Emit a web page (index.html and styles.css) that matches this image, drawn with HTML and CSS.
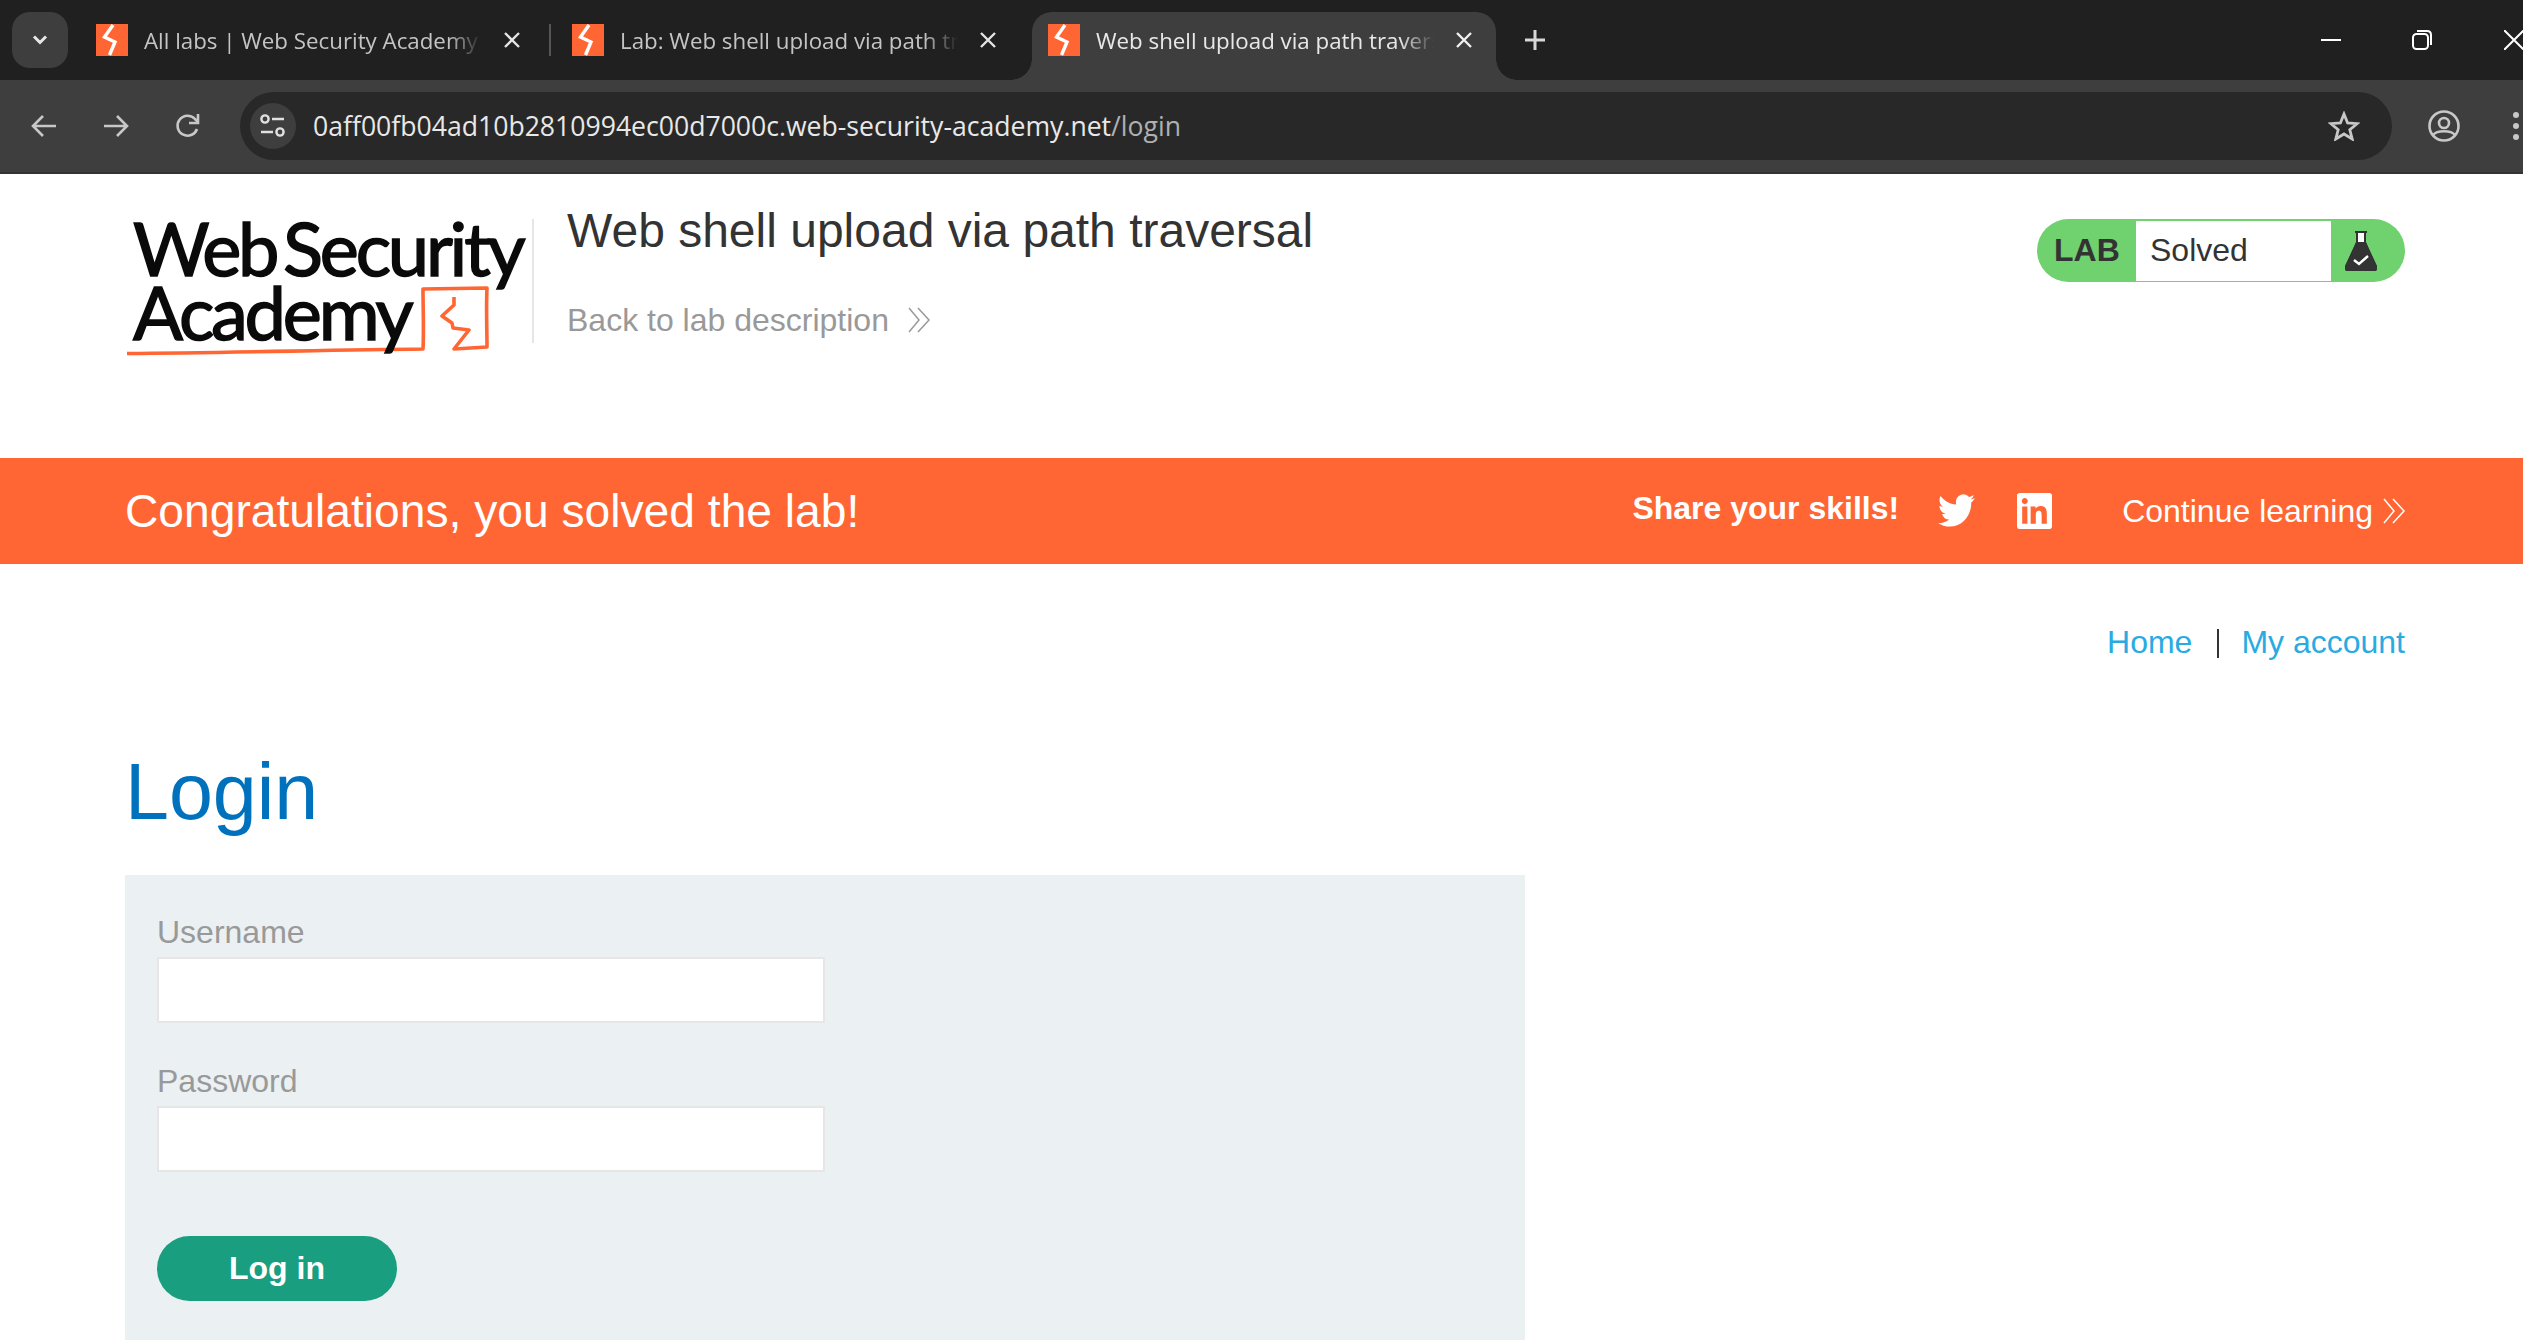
FILE: index.html
```html
<!DOCTYPE html>
<html lang="en">
<head>
<meta charset="utf-8">
<title>Web shell upload via path traversal</title>
<link rel="stylesheet" href="styles.css">
</head>
<body>
<div class="browser">
  <div class="tabstrip">
    <div class="tabsearch"><svg width="16" height="10" viewBox="0 0 16 10"><path d="M2 1.5 8 7.5 14 1.5" fill="none" stroke="#e8e8e8" stroke-width="3"/></svg></div>
    <div class="tab">
      <svg class="favicon" viewBox="0 0 32 32"><rect width="32" height="32" fill="#ff6633"/><path d="M17 1 8.5 13 19 18 13.5 31" fill="none" stroke="#fff" stroke-width="3.4"/></svg>
      <span class="tab-title">All labs | Web Security Academy</span>
      <svg class="tab-close" viewBox="0 0 16 16"><path d="M1 1 15 15M15 1 1 15" stroke="#e4e4e4" stroke-width="2.4"/></svg>
    </div>
    <div class="tab-sep"></div>
    <div class="tab">
      <svg class="favicon" viewBox="0 0 32 32"><rect width="32" height="32" fill="#ff6633"/><path d="M17 1 8.5 13 19 18 13.5 31" fill="none" stroke="#fff" stroke-width="3.4"/></svg>
      <span class="tab-title">Lab: Web shell upload via path traversal</span>
      <svg class="tab-close" viewBox="0 0 16 16"><path d="M1 1 15 15M15 1 1 15" stroke="#e4e4e4" stroke-width="2.4"/></svg>
    </div>
    <div class="tab-sep tab-sep-hidden"></div>
    <div class="tab tab-active">
      <svg class="favicon" viewBox="0 0 32 32"><rect width="32" height="32" fill="#ff6633"/><path d="M17 1 8.5 13 19 18 13.5 31" fill="none" stroke="#fff" stroke-width="3.4"/></svg>
      <span class="tab-title">Web shell upload via path traversal</span>
      <svg class="tab-close" viewBox="0 0 16 16"><path d="M1 1 15 15M15 1 1 15" stroke="#f0f0f0" stroke-width="2.4"/></svg>
    </div>
    <svg class="newtab" viewBox="0 0 20 20"><path d="M10 0V20M0 10H20" stroke="#d8d8d8" stroke-width="3"/></svg>
    <div class="winctl">
      <svg class="win-min" viewBox="0 0 20 4"><path d="M0 2H20" stroke="#fff" stroke-width="2"/></svg>
      <svg class="win-max" viewBox="0 0 20 20"><rect x="1" y="4" width="15" height="15" rx="3.5" fill="none" stroke="#fff" stroke-width="2"/><path d="M5 1H15Q19 1 19 5V15" fill="none" stroke="#fff" stroke-width="2"/></svg>
      <svg class="win-close" viewBox="0 0 20 20"><path d="M0 0 20 20M20 0 0 20" stroke="#fff" stroke-width="2"/></svg>
    </div>
  </div>
  <div class="toolbar">
    <div class="navbtn"><svg width="28" height="28" viewBox="0 0 28 28"><path d="M26 14H3M13 4 3 14 13 24" fill="none" stroke="#c8c8c8" stroke-width="2.6"/></svg></div>
    <div class="navbtn"><svg width="28" height="28" viewBox="0 0 28 28"><path d="M2 14H25M15 4 25 14 15 24" fill="none" stroke="#c8c8c8" stroke-width="2.6"/></svg></div>
    <div class="navbtn"><svg width="28" height="28" viewBox="0 0 28 28"><path d="M23 17A10 10 0 1 1 21 7L24 10" fill="none" stroke="#c8c8c8" stroke-width="2.6"/><path d="M24 2V11H15" fill="none" stroke="#c8c8c8" stroke-width="2.6"/></svg></div>
    <div class="omnibox">
      <div class="sitechip"><svg width="26" height="24" viewBox="0 0 26 24"><circle cx="5" cy="5" r="3.6" fill="none" stroke="#e0e0e0" stroke-width="2.4"/><path d="M12 5H24M1 18H13" stroke="#e0e0e0" stroke-width="2.4"/><circle cx="20" cy="18" r="3.6" fill="none" stroke="#e0e0e0" stroke-width="2.4"/></svg></div>
      <span class="url">0aff00fb04ad10b2810994ec00d7000c.web-security-academy.net<span class="url-path">/login</span></span>
      <svg class="star" viewBox="0 0 32 30"><path d="M16 3 19.6 12 29 12.7 21.8 18.8 24.2 28 16 23 7.8 28 10.2 18.8 3 12.7 12.4 12Z" fill="none" stroke="#c8c8c8" stroke-width="2.8"/></svg>
    </div>
    <svg class="profile" viewBox="0 0 32 32"><circle cx="16" cy="16" r="14.5" fill="none" stroke="#c8c8c8" stroke-width="2.6"/><circle cx="16" cy="13" r="5" fill="none" stroke="#c8c8c8" stroke-width="2.6"/><path d="M5 25C9 20 23 20 27 25" fill="none" stroke="#c8c8c8" stroke-width="2.6"/></svg>
    <svg class="dots" viewBox="0 0 6 28"><circle cx="3" cy="3" r="3" fill="#c8c8c8"/><circle cx="3" cy="14" r="3" fill="#c8c8c8"/><circle cx="3" cy="25" r="3" fill="#c8c8c8"/></svg>
  </div>
</div>

<div class="page">
  <header class="lab-header">
    <div class="logo">
      <svg class="logo-mark" width="370" height="140" viewBox="0 0 370 140"><path d="M2 134.500C100 134 200 131 298 130 299 110 298 90 298 70L362 69C361 90 362 110 362 128L329 130 344 111 328 109 327 104 317 97 329 86 329 78" fill="none" stroke="#ff6633" stroke-width="3.6" stroke-linejoin="round"/></svg>
      <div class="logo-line logo-line-first">Web Security</div>
      <div class="logo-line">Academy</div>
    </div>
    <div class="lab-info">
      <h2 class="lab-title">Web shell upload via path traversal</h2>
      <a class="back-link">Back to lab description<svg class="chev" width="24" height="26" viewBox="0 0 24 26"><path d="M2 1 12 13 2 25M11 1 22 13 11 25" fill="none" stroke="#999" stroke-width="1.5"/></svg></a>
    </div>
    <div class="lab-status">
      <span class="lab-tag">LAB</span>
      <span class="lab-state">Solved</span>
      <svg class="flask" viewBox="0 0 32 40"><path d="M10 1H22M12 2V12L1 35Q0 40 4 40H28Q32 40 31 35L20 12V2" fill="#fff" stroke="#333" stroke-width="2"/><path d="M11 11H21L32 36Q32 40 28 40H4Q0 40 0 36Z" fill="#333"/><path d="M9 29 14 33 23 25" fill="none" stroke="#fff" stroke-width="2.4"/></svg>
    </div>
  </header>

  <section class="banner">
    <span class="banner-msg">Congratulations, you solved the lab!</span>
    <div class="share">
      <strong class="share-text">Share your skills!</strong>
      <svg class="twitter" viewBox="0 2 24 20" preserveAspectRatio="none"><path fill="#fff" d="M23.953 4.57a10 10 0 01-2.825.775 4.958 4.958 0 002.163-2.723c-.951.555-2.005.959-3.127 1.184a4.92 4.92 0 00-8.384 4.482C7.69 8.095 4.067 6.13 1.64 3.162a4.822 4.822 0 00-.666 2.475c0 1.71.87 3.213 2.188 4.096a4.904 4.904 0 01-2.228-.616v.06a4.923 4.923 0 003.946 4.827 4.996 4.996 0 01-2.212.085 4.936 4.936 0 004.604 3.417 9.867 9.867 0 01-6.102 2.105c-.39 0-.779-.023-1.17-.067a13.995 13.995 0 007.557 2.209c9.053 0 13.998-7.496 13.998-13.985 0-.21 0-.42-.015-.63A9.935 9.935 0 0024 4.59z"/></svg>
      <svg class="linkedin" viewBox="0 0 24 24" preserveAspectRatio="none"><path fill="#fff" d="M20.447 20.452h-3.554v-5.569c0-1.328-.027-3.037-1.852-3.037-1.853 0-2.136 1.445-2.136 2.939v5.667H9.351V9h3.414v1.561h.046c.477-.9 1.637-1.85 3.37-1.85 3.601 0 4.267 2.37 4.267 5.455v6.286zM5.337 7.433c-1.144 0-2.063-.926-2.063-2.065 0-1.138.92-2.063 2.063-2.063 1.14 0 2.064.925 2.064 2.063 0 1.139-.925 2.065-2.064 2.065zm1.782 13.019H3.555V9h3.564v11.452zM22.225 0H1.771C.792 0 0 .774 0 1.729v20.542C0 23.227.792 24 1.771 24h20.451C23.2 24 24 23.227 24 22.271V1.729C24 .774 23.2 0 22.222 0h.003z"/></svg>
      <a class="continue">Continue learning<svg class="chev-w" width="22" height="26" viewBox="0 0 22 26"><path d="M1 1 11 13 1 25M10 1 21 13 10 25" fill="none" stroke="#fff" stroke-width="1.5"/></svg></a>
    </div>
  </section>

  <nav class="toplinks">
    <a class="toplink">Home</a><span class="toplink-sep"></span><a class="toplink">My account</a>
  </nav>

  <h1 class="page-title">Login</h1>

  <form class="login-panel">
    <label class="field-label">Username</label>
    <input class="field-input" type="text">
    <label class="field-label field-label-next">Password</label>
    <input class="field-input" type="password">
    <button class="login-btn" type="button">Log in</button>
  </form>
</div>
</body>
</html>
```
FILE: styles.css
```css
* { box-sizing: border-box; }
html, body { margin: 0; height: 100%; overflow: hidden; background: #fff; }
body { display: flex; flex-direction: column; font-family: "Liberation Sans", Arial, sans-serif; }

.browser { flex: none; font-family: "Open Sans", sans-serif; }
.tabstrip { height: 80px; background: #202020; display: flex; align-items: flex-start; padding: 12px 0 0 12px; position: relative; }
.tabsearch { width: 56px; height: 56px; border-radius: 18px; background: #3e3e3e; display: flex; align-items: center; justify-content: center; margin-right: 12px; }
.tab { width: 464px; height: 68px; display: flex; align-items: flex-start; padding: 12px 24px 0 16px; position: relative; color: #c4c4c4; }
.tab-active { background: #3e3e3e; border-radius: 20px 20px 0 0; color: #e8e8e8; }
.tab-active::before, .tab-active::after { content: ""; position: absolute; bottom: 0; width: 21px; height: 21px; }
.tab-active::before { left: -21px; background: radial-gradient(circle at 0 0, transparent 20.5px, #3e3e3e 21px); }
.tab-active::after { right: -21px; background: radial-gradient(circle at 100% 0, transparent 20.5px, #3e3e3e 21px); }
.favicon { width: 32px; height: 32px; flex: none; margin-right: 16px; }
.tab-title { width: 338px; flex: none; font-size: 22.3px; line-height: 34px; white-space: nowrap; overflow: hidden; -webkit-mask-image: linear-gradient(to right, #000 90%, transparent 100%); mask-image: linear-gradient(to right, #000 90%, transparent 100%); }
.tab-close { width: 16px; height: 16px; flex: none; margin: 8px 0 0 22px; }
.tab-sep { width: 2px; height: 32px; margin: 12px 5px 0; background: #555; flex: none; }
.tab-sep-hidden { background: transparent; }
.newtab { width: 20px; height: 20px; margin: 18px 0 0 29px; flex: none; }
.winctl { margin-left: auto; display: flex; align-items: center; height: 20px; margin-top: 18px; }
.win-min { width: 20px; height: 4px; }
.win-max { width: 20px; height: 20px; margin-left: 71px; }
.win-close { width: 20px; height: 20px; margin-left: 72px; margin-right: -1px; flex: none; }

.toolbar { height: 94px; background: #3e3e3e; border-bottom: 2px solid #333; display: flex; align-items: flex-start; padding: 12px 0 0 8px; }
.navbtn { width: 72px; height: 68px; display: flex; align-items: center; justify-content: center; flex: none; }
.omnibox { width: 2152px; height: 68px; margin-left: 16px; border-radius: 34px; background: #282828; display: flex; align-items: center; padding: 0 32px 0 10px; flex: none; }
.sitechip { width: 46px; height: 46px; border-radius: 50%; background: #3e3e3e; display: flex; align-items: center; justify-content: center; flex: none; }
.url { margin-left: 17px; font-size: 26.6px; color: #e8e8e8; white-space: nowrap; }
.url-path { color: #b0b0b0; }
.star { width: 32px; height: 30px; margin-left: auto; flex: none; }
.profile { width: 32px; height: 32px; margin: 18px 0 0 36px; flex: none; }
.dots { width: 6px; height: 28px; margin: 20px 0 0 53px; flex: none; }

.page { flex: 1; display: flex; flex-direction: column; min-height: 0; overflow: hidden; color: #333; }
.lab-header { height: 284px; flex: none; display: flex; align-items: flex-start; padding: 0 118px 0 125px; }
.logo { width: 409px; height: 124px; margin-top: 45px; border-right: 2px solid #e6e6e6; position: relative; font-family: Lato, sans-serif; color: #0a0a0a; flex: none; }
.logo-line { position: relative; font-size: 74px; font-weight: 400; line-height: 66px; letter-spacing: -3.2px; word-spacing: -9px; margin: 0 0 0 8px; white-space: nowrap; -webkit-text-stroke: 1.5px #0a0a0a; top: -6px; }
.logo-line-first { top: -4px; }
.logo-mark { position: absolute; left: 0; top: 0; }
.lab-info { margin-left: 33px; padding-top: 27px; }
.lab-title { margin: 0; font-size: 48px; line-height: 60px; font-weight: 400; color: #333; white-space: nowrap; }
.back-link { display: flex; align-items: center; margin-top: 39px; font-size: 32px; line-height: 40px; color: #999; }
.chev { margin-left: 18px; }
.lab-status { margin: 45px 0 0 auto; width: 368px; height: 63px; border-radius: 32px; background: #70d16f; display: flex; align-items: center; flex: none; }
.lab-tag { width: 99px; padding-left: 17px; font-size: 32px; font-weight: 700; color: #333; flex: none; }
.lab-state { width: 195px; height: 60px; background: #fff; padding-left: 14px; font-size: 32px; line-height: 58px; color: #333; flex: none; }
.flask { width: 32px; height: 40px; margin-left: 14px; flex: none; }

.banner { height: 106px; flex: none; background: #ff6633; color: #fff; display: flex; align-items: center; padding: 0 118px 0 125px; }
.banner-msg { font-size: 46.2px; }
.share { margin-left: auto; display: flex; align-items: center; }
.share-text { font-size: 32px; font-weight: 700; margin-top: -5px; }
.twitter { width: 37px; height: 33px; margin: -1px 0 0 39px; }
.linkedin { width: 35px; height: 36px; margin: -1px 0 0 42px; }
.continue { display: flex; align-items: center; font-size: 32px; margin-left: 70px; }
.chev-w { margin-left: 10px; }

.toplinks { flex: none; display: flex; justify-content: flex-end; align-items: center; padding-right: 118px; margin-top: 58px; height: 40px; font-size: 32px; line-height: 40px; }
.toplink { color: #29abe2; }
.toplink-sep { width: 2px; height: 29px; background: #333; margin: 3px 22px 0 25px; }

.page-title { flex: none; margin: 85px 0 38px 125px; font-size: 79px; line-height: 90px; font-weight: 400; color: #0071bc; }

.login-panel { flex: 1; margin-left: 125px; width: 1400px; background: #ebf0f2; padding: 37px 32px 0; display: flex; flex-direction: column; align-items: flex-start; }
.field-label { font-size: 32px; line-height: 40px; color: #999; }
.field-label-next { margin-top: 38px; }
.field-input { display: block; width: 668px; height: 66px; margin: 5px 0 0; background: #fff; border: 2px solid #e6e6e6; border-radius: 0; }
.login-btn { margin-top: 64px; width: 240px; height: 65px; border: 0; border-radius: 33px; background: #199e80; color: #fff; font: 700 32px "Liberation Sans", Arial, sans-serif; }
```
